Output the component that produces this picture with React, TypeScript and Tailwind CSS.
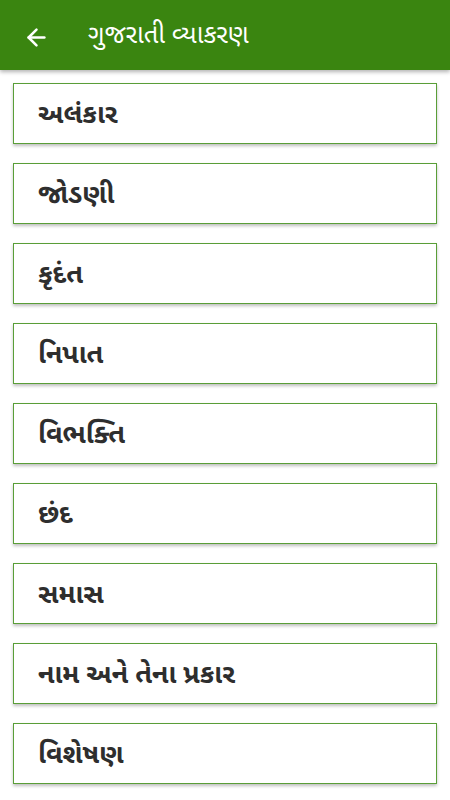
import { ArrowLeft } from "lucide-react";

const topics = [
  "અલંકાર",
  "જોડણી",
  "કૃદંત",
  "નિપાત",
  "વિભક્તિ",
  "છંદ",
  "સમાસ",
  "નામ અને તેના પ્રકાર",
  "વિશેષણ",
];

export default function App() {
  return (
    <div
      className="w-[450px] h-[800px] overflow-hidden bg-white"
      style={{ fontFamily: '"Noto Sans Gujarati", "Noto Sans", Roboto, sans-serif' }}
    >
      <header className="h-[70px] bg-[#3a8510] flex items-center pt-[4px] shadow-[0_2px_4px_rgba(0,0,0,0.3)] relative z-10">
        <button className="ml-[22px] w-[28px] h-[28px] flex items-center justify-center text-white">
          <ArrowLeft size={27} strokeWidth={2.25} />
        </button>
        <h1 className="ml-[38px] text-white text-[25.5px] font-normal">ગુજરાતી વ્યાકરણ</h1>
      </header>

      <div className="flex flex-col gap-[19px] pt-[13px] px-[13px]">
        {topics.map((t) => (
          <div
            key={t}
            className="h-[61px] border border-[#5a9e38] bg-white flex items-center pl-[24px] pt-[8px] shadow-[0_2px_3px_rgba(0,0,0,0.25)]"
          >
            <span className="text-[27px] font-bold text-[#2e2e2e]">{t}</span>
          </div>
        ))}
      </div>
    </div>
  );
}
